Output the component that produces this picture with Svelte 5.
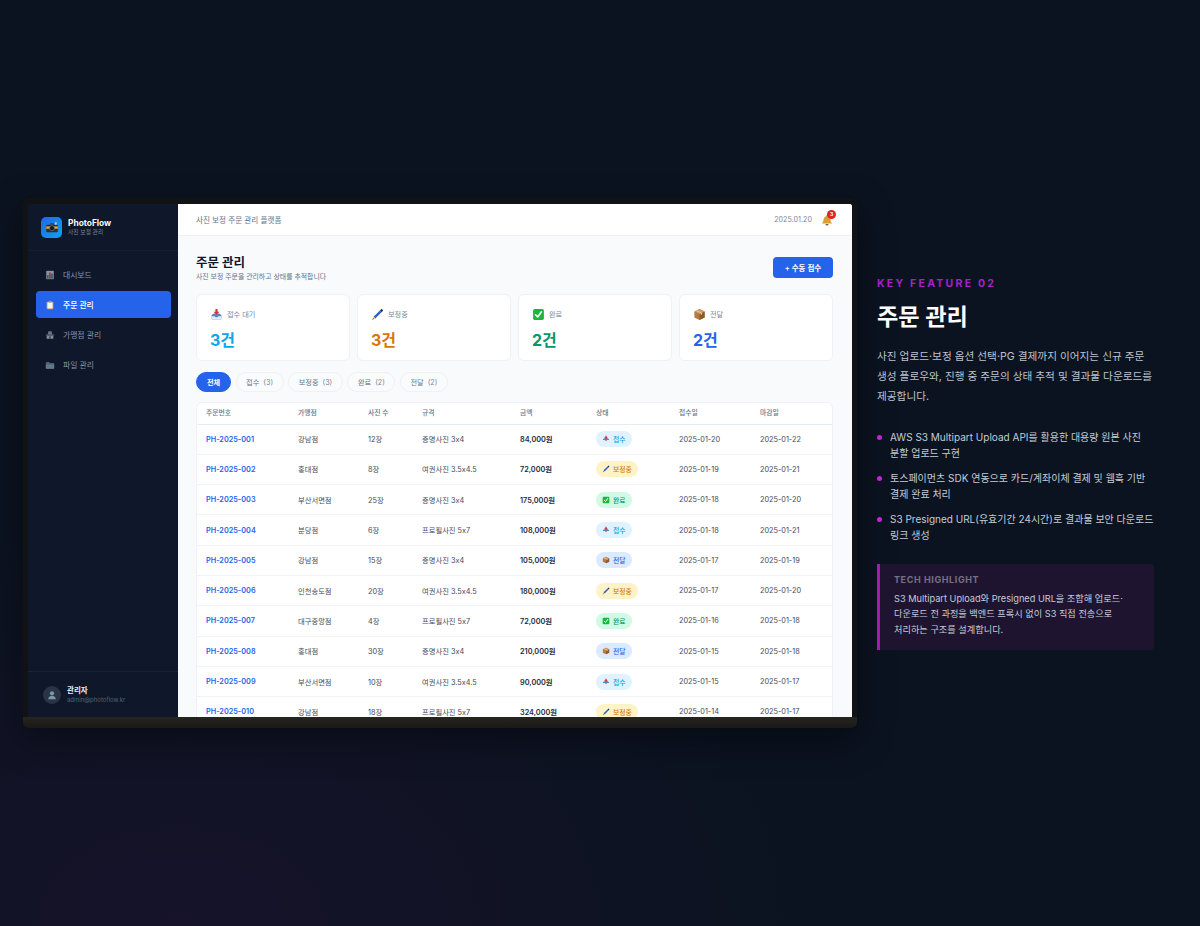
<script>
	const navItems = [
		{ label: '대시보드', icon: 'chart' },
		{ label: '주문 관리', icon: 'clipboard', active: true },
		{ label: '가맹점 관리', icon: 'store' },
		{ label: '파일 관리', icon: 'folder' }
	];

	const stats = [
		{ label: '접수 대기', value: '3건', icon: 'inbox', tone: 'sky' },
		{ label: '보정중', value: '3건', icon: 'pen', tone: 'amber' },
		{ label: '완료', value: '2건', icon: 'check', tone: 'green' },
		{ label: '전달', value: '2건', icon: 'box', tone: 'blue' }
	];

	const tabs = [
		{ label: '전체', active: true },
		{ label: '접수', count: 3 },
		{ label: '보정중', count: 3 },
		{ label: '완료', count: 2 },
		{ label: '전달', count: 2 }
	];

	const columns = ['주문번호', '가맹점', '사진 수', '규격', '금액', '상태', '접수일', '마감일'];

	const statusMap = {
		received: { label: '접수', icon: 'inbox' },
		editing: { label: '보정중', icon: 'pen' },
		done: { label: '완료', icon: 'check' },
		sent: { label: '전달', icon: 'box' }
	};

	const orders = [
		['PH-2025-001', '강남점', '12장', '증명사진 3x4', '84,000원', 'received', '2025-01-20', '2025-01-22'],
		['PH-2025-002', '홍대점', '8장', '여권사진 3.5x4.5', '72,000원', 'editing', '2025-01-19', '2025-01-21'],
		['PH-2025-003', '부산서면점', '25장', '증명사진 3x4', '175,000원', 'done', '2025-01-18', '2025-01-20'],
		['PH-2025-004', '분당점', '6장', '프로필사진 5x7', '108,000원', 'received', '2025-01-18', '2025-01-21'],
		['PH-2025-005', '강남점', '15장', '증명사진 3x4', '105,000원', 'sent', '2025-01-17', '2025-01-19'],
		['PH-2025-006', '인천송도점', '20장', '여권사진 3.5x4.5', '180,000원', 'editing', '2025-01-17', '2025-01-20'],
		['PH-2025-007', '대구중앙점', '4장', '프로필사진 5x7', '72,000원', 'done', '2025-01-16', '2025-01-18'],
		['PH-2025-008', '홍대점', '30장', '증명사진 3x4', '210,000원', 'sent', '2025-01-15', '2025-01-18'],
		['PH-2025-009', '부산서면점', '10장', '여권사진 3.5x4.5', '90,000원', 'received', '2025-01-15', '2025-01-17'],
		['PH-2025-010', '강남점', '18장', '프로필사진 5x7', '324,000원', 'editing', '2025-01-14', '2025-01-17']
	];

	const features = [
		['AWS S3 Multipart Upload API를 활용한 대용량 원본 사진', '분할 업로드 구현'],
		['토스페이먼츠 SDK 연동으로 카드/계좌이체 결제 및 웹훅 기반', '결제 완료 처리'],
		['S3 Presigned URL(유효기간 24시간)로 결과물 보안 다운로드', '링크 생성']
	];
</script>

{#snippet icon(name, size)}
	<svg class="emoji" width={size} height={size} viewBox="0 0 24 24" aria-hidden="true">
		{#if name === 'inbox'}
			<path d="M3 13l4-3h10l4 3v7a1 1 0 0 1-1 1H4a1 1 0 0 1-1-1z" fill="#4f86c6" />
			<path d="M3 15h6l1 2h4l1-2h6v5a1 1 0 0 1-1 1H4a1 1 0 0 1-1-1z" fill="#e6ecf2" />
			<path d="M10 2h4v5h3.500L12 12.500 6.500 7H10z" fill="#d8303a" />
		{:else if name === 'pen'}
			<path d="M19.500 1.500l3 3-3 3.200-3.100-3.100z" fill="#17306e" />
			<path d="M16.400 4.600l3.100 3.100L8 19.200 4.800 16z" fill="#2f62c9" />
			<path d="M4.800 16L8 19.200l-5.500 2.300z" fill="#e3b27a" />
			<path d="M3.700 19l1.300 1.300-2.500 1.200z" fill="#222" />
		{:else if name === 'check'}
			<rect x="2" y="2" width="20" height="20" rx="3" fill="#18b83c" />
			<path d="M6.500 12.500l4 4 7-9.500" fill="none" stroke="#fff" stroke-width="3" stroke-linecap="round" stroke-linejoin="round" />
		{:else if name === 'box'}
			<path d="M12 2l9.500 4.500v11L12 22l-9.500-4.500v-11z" fill="#b57a42" />
			<path d="M12 11l9.500-4.500v11L12 22z" fill="#8f5a2b" />
			<path d="M12 2l9.500 4.500L12 11 2.500 6.500z" fill="#d09a62" />
			<path d="M7 4.300l9.500 4.500v3l-2 1V9.800L5 5.300z" fill="#e8cba4" />
		{:else if name === 'chart'}
			<rect x="3" y="2" width="18" height="20" fill="#dfe5ea" />
			<rect x="5" y="12" width="3.500" height="9" fill="#2ea05a" />
			<rect x="10" y="6" width="3.500" height="15" fill="#d8413e" />
			<rect x="15" y="9" width="3.500" height="12" fill="#3b73c4" />
		{:else if name === 'clipboard'}
			<rect x="4" y="4" width="16" height="18" rx="2" fill="#c9a77e" />
			<rect x="6" y="6" width="12" height="14" fill="#f4f4f2" />
			<rect x="8.500" y="2" width="7" height="4" rx="1" fill="#8a98a8" />
		{:else if name === 'store'}
			<path d="M8 3h8l1 8H7z" fill="#a8b2bf" />
			<rect x="4" y="11" width="16" height="10" fill="#d7dde4" />
			<path d="M2 11h20v3H2z" fill="#74808e" />
			<rect x="10" y="15" width="4" height="6" fill="#5b6775" />
		{:else if name === 'folder'}
			<path d="M2 7a2 2 0 0 1 2-2h6l2 2h8a2 2 0 0 1 2 2v10a2 2 0 0 1-2 2H4a2 2 0 0 1-2-2z" fill="#6f93b0" />
			<path d="M2 11h20v8a2 2 0 0 1-2 2H4a2 2 0 0 1-2-2z" fill="#9cb9d0" />
		{:else if name === 'bell'}
			<path d="M12 2a2 2 0 0 1 2 2v.5c3.500 1 5 4 5 7.500 0 3 1 4.500 3 6v1H2v-1c2-1.500 3-3 3-6 0-3.500 1.500-6.500 5-7.500V4a2 2 0 0 1 2-2z" fill="#d9a032" />
			<path d="M9 20h6a3 3 0 0 1-6 0z" fill="#8f5a1a" />
		{:else if name === 'camera'}
			<rect x="2" y="8" width="20" height="13" rx="2" fill="#2c3136" />
			<rect x="2" y="11" width="20" height="4" fill="#e0a93b" />
			<path d="M8 8l1.500-3h5L16 8z" fill="#3d434a" />
			<rect x="17" y="4" width="3" height="4" fill="#c9d0d6" />
			<circle cx="12" cy="14" r="4.200" fill="#15181b" stroke="#7b858e" stroke-width="1" />
		{:else if name === 'user'}
			<circle cx="12" cy="8" r="5" fill="#7d97ad" />
			<path d="M3 22c0-5 4-8 9-8s9 3 9 8z" fill="#7d97ad" />
		{/if}
	</svg>
{/snippet}

<div class="page">
	<div class="device">
		<div class="screen">
			<aside class="sidebar">
				<div class="brand">
					<div class="logo">{@render icon('camera', 14)}</div>
					<div>
						<div class="brand-name">PhotoFlow</div>
						<div class="brand-sub">사진 보정 관리</div>
					</div>
				</div>
				<nav class="nav">
					{#each navItems as item}
						<div class="nav-item" class:active={item.active}>
							<span class="nav-icon">{@render icon(item.icon, 10)}</span>
							{item.label}
						</div>
					{/each}
				</nav>
				<div class="account">
					<div class="avatar">{@render icon('user', 10)}</div>
					<div>
						<div class="account-name">관리자</div>
						<div class="account-mail">admin@photoflow.kr</div>
					</div>
				</div>
			</aside>

			<main class="main">
				<header class="topbar">
					<span class="topbar-title">사진 보정 주문 관리 플랫폼</span>
					<div class="topbar-right">
						<span class="date">2025.01.20</span>
						<span class="bell">
							{@render icon('bell', 12)}
							<span class="bell-count">3</span>
						</span>
					</div>
				</header>

				<div class="content">
					<div class="page-head">
						<div>
							<h2>주문 관리</h2>
							<p>사진 보정 주문을 관리하고 상태를 추적합니다</p>
						</div>
						<button class="add-btn">+ 수동 접수</button>
					</div>

					<div class="stats">
						{#each stats as stat}
							<div class="stat">
								<div class="stat-label">
									{@render icon(stat.icon, 13)}
									<span>{stat.label}</span>
								</div>
								<div class="stat-value {stat.tone}">{stat.value}</div>
							</div>
						{/each}
					</div>

					<div class="tabs">
						{#each tabs as tab}
							<span class="tab" class:active={tab.active}>
								{tab.label}
								{#if tab.count}<em>({tab.count})</em>{/if}
							</span>
						{/each}
					</div>

					<div class="table-wrap">
						<table>
							<thead>
								<tr>
									{#each columns as col}
										<th>{col}</th>
									{/each}
								</tr>
							</thead>
							<tbody>
								{#each orders as o}
									<tr>
										<td class="order-id">{o[0]}</td>
										<td>{o[1]}</td>
										<td>{o[2]}</td>
										<td>{o[3]}</td>
										<td class="amount">{o[4]}</td>
										<td>
											<span class="badge {o[5]}">
												{@render icon(statusMap[o[5]].icon, 8)}
												{statusMap[o[5]].label}
											</span>
										</td>
										<td>{o[6]}</td>
										<td>{o[7]}</td>
									</tr>
								{/each}
							</tbody>
						</table>
					</div>
				</div>
			</main>
		</div>
	</div>

	<section class="detail">
		<div class="eyebrow">KEY FEATURE 02</div>
		<h1>주문 관리</h1>
		<p class="lead">사진 업로드·보정 옵션 선택·PG 결제까지 이어지는 신규 주문<br />생성 플로우와, 진행 중 주문의 상태 추적 및 결과물 다운로드를<br />제공합니다.</p>
		<ul>
			{#each features as feature}
				<li>{feature[0]}<br />{feature[1]}</li>
			{/each}
		</ul>
		<div class="highlight">
			<div class="highlight-title">TECH HIGHLIGHT</div>
			<p>S3 Multipart Upload와 Presigned URL을 조합해 업로드·<br />다운로드 전 과정을 백엔드 프록시 없이 S3 직접 전송으로<br />처리하는 구조를 설계합니다.</p>
		</div>
	</section>
</div>

<style>
	:global(body) {
		margin: 0;
		background: #0b1320;
	}

	.page {
		box-sizing: border-box;
		height: 926px;
		padding-left: 23px;
		display: flex;
		align-items: center;
		gap: 20px;
		overflow: hidden;
		background:
			radial-gradient(ellipse 620px 420px at 15% 100%, #16132a 0%, rgba(22, 19, 42, 0) 100%),
			#0b1320;
		font-family: Inter, 'Noto Sans CJK KR', sans-serif;
	}

	.device {
		flex: none;
		width: 834px;
		padding: 6px 5px 11px;
		box-sizing: border-box;
		border-radius: 7px 7px 6px 6px;
		background: linear-gradient(180deg, #101216 0, #101216 calc(100% - 11px), #26251f calc(100% - 11px), #191917 100%);
		box-shadow: 0 12px 36px rgba(0, 0, 0, 0.4);
	}

	.screen {
		display: flex;
		height: 513px;
		overflow: hidden;
		border-radius: 3px 3px 0 0;
	}

	.emoji {
		flex: none;
		display: block;
	}

	.sidebar {
		flex: none;
		width: 150px;
		display: flex;
		flex-direction: column;
		background: #0f172a;
	}

	.brand {
		display: flex;
		align-items: center;
		gap: 6px;
		height: 46px;
		padding-left: 13px;
		border-bottom: 1px solid #151e32;
	}

	.logo {
		width: 21px;
		height: 21px;
		border-radius: 5px;
		display: flex;
		align-items: center;
		justify-content: center;
		background: linear-gradient(135deg, #2563eb, #0ea5e9);
	}

	.brand-name {
		font-size: 8.400px;
		font-weight: 700;
		line-height: 10px;
		color: #f8fafc;
	}

	.brand-sub {
		font-size: 5.800px;
		line-height: 8px;
		color: #7b8798;
	}

	.nav {
		flex: 1;
		display: flex;
		flex-direction: column;
		gap: 3px;
		padding: 10px 7px 0 8px;
	}

	.nav-item {
		display: flex;
		align-items: center;
		gap: 8px;
		height: 27px;
		padding-left: 9px;
		border-radius: 4px;
		font-size: 7.800px;
		color: #8a95a6;
	}

	.nav-icon {
		opacity: 0.6;
	}

	.nav-item.active {
		background: #2563eb;
		color: #fff;
		font-weight: 500;
	}

	.nav-item.active .nav-icon {
		opacity: 1;
	}

	.account {
		display: flex;
		align-items: center;
		gap: 6px;
		height: 45px;
		padding-left: 15px;
		border-top: 1px solid #182238;
	}

	.avatar {
		width: 18px;
		height: 18px;
		border-radius: 50%;
		display: flex;
		align-items: center;
		justify-content: center;
		background: #2a3447;
	}

	.account-name {
		font-size: 7.500px;
		font-weight: 600;
		line-height: 10px;
		color: #e8edf3;
	}

	.account-mail {
		font-size: 6px;
		line-height: 8px;
		color: #566173;
	}

	.main {
		flex: 1;
		min-width: 0;
		display: flex;
		flex-direction: column;
		background: #f8fafc;
	}

	.topbar {
		flex: none;
		box-sizing: border-box;
		height: 32px;
		padding: 0 19px 0 18px;
		display: flex;
		align-items: center;
		justify-content: space-between;
		background: #fff;
		border-bottom: 1px solid #edf0f4;
	}

	.topbar-title {
		font-size: 7.600px;
		color: #64748b;
	}

	.topbar-right {
		display: flex;
		align-items: center;
		gap: 9px;
	}

	.date {
		font-size: 7.200px;
		color: #7c8798;
	}

	.bell {
		position: relative;
	}

	.bell-count {
		position: absolute;
		top: -4px;
		right: -3px;
		width: 9px;
		height: 9px;
		border-radius: 50%;
		background: #dc2626;
		color: #fff;
		font-size: 5px;
		font-weight: 700;
		line-height: 9px;
		text-align: center;
	}

	.content {
		flex: 1;
		padding: 19px 19px 0 18px;
	}

	.page-head {
		display: flex;
		align-items: flex-start;
		justify-content: space-between;
		height: 27px;
	}

	h2 {
		margin: 0;
		font-size: 12.500px;
		font-weight: 700;
		line-height: 16px;
		color: #0f172a;
	}

	.page-head p {
		margin: 0;
		font-size: 6.900px;
		line-height: 11px;
		color: #64748b;
	}

	.add-btn {
		width: 60px;
		height: 21px;
		margin-top: 2px;
		padding: 0;
		border: none;
		border-radius: 4px;
		background: #2563eb;
		color: #fff;
		font-family: inherit;
		font-size: 7.500px;
		font-weight: 600;
	}

	.stats {
		display: grid;
		grid-template-columns: repeat(4, 1fr);
		gap: 7px;
		margin-top: 12px;
	}

	.stat {
		box-sizing: border-box;
		height: 67px;
		padding: 12px 13px 0;
		border: 1px solid #eef1f5;
		border-radius: 6px;
		background: #fff;
	}

	.stat-label {
		display: flex;
		align-items: center;
		gap: 4px;
		height: 14px;
		font-size: 7.200px;
		color: #7c8798;
	}

	.stat-value {
		margin-top: 8px;
		font-size: 16px;
		font-weight: 700;
		line-height: 22px;
	}

	.sky {
		color: #0ea5e9;
	}

	.amber {
		color: #d97706;
	}

	.green {
		color: #059669;
	}

	.blue {
		color: #2563eb;
	}

	.tabs {
		display: flex;
		gap: 4.500px;
		margin-top: 11px;
	}

	.tab {
		box-sizing: border-box;
		height: 20px;
		padding: 0 9.600px;
		display: flex;
		align-items: center;
		gap: 4px;
		border: 1px solid #eef1f5;
		border-radius: 10px;
		background: #f9fbfd;
		font-size: 7.200px;
		color: #64748b;
	}

	.tab em {
		font-style: normal;
		color: #7c8798;
	}

	.tab.active {
		width: 35px;
		justify-content: center;
		padding: 0;
		border-color: #2563eb;
		background: #2563eb;
		color: #fff;
		font-weight: 600;
	}

	.table-wrap {
		margin-top: 10px;
		border: 1px solid #eef1f5;
		border-bottom: none;
		border-radius: 6px 6px 0 0;
		background: #fff;
	}

	table {
		width: 100%;
		table-layout: fixed;
		border-collapse: collapse;
	}

	th,
	td {
		box-sizing: border-box;
	}

	th:nth-child(1) { width: 92px; }
	th:nth-child(2) { width: 70px; }
	th:nth-child(3) { width: 54px; }
	th:nth-child(4) { width: 98px; }
	th:nth-child(5) { width: 76px; }
	th:nth-child(6) { width: 83px; }
	th:nth-child(7) { width: 81px; }

	th {
		height: 21px;
		padding: 0 0 3px 9px;
		text-align: left;
		font-size: 6.800px;
		font-weight: 500;
		color: #64748b;
		border-bottom: 1px solid #e8edf3;
	}

	td {
		height: 30.300px;
		padding: 0 0 0 9px;
		font-size: 7.300px;
		color: #3f4a5a;
		border-bottom: 1px solid #f1f4f7;
		white-space: nowrap;
	}

	.order-id {
		font-weight: 600;
		color: #2563eb;
	}

	.amount {
		font-weight: 600;
		color: #1e293b;
	}

	.badge {
		display: inline-flex;
		align-items: center;
		gap: 3px;
		height: 16px;
		padding: 0 6px;
		border-radius: 8px;
		font-size: 6.800px;
		font-weight: 500;
	}

	.received {
		background: #e0f2fe;
		color: #0ea5e9;
	}

	.editing {
		background: #fef3c7;
		color: #d97706;
	}

	.done {
		background: #d1fae5;
		color: #059669;
	}

	.sent {
		background: #dbeafe;
		color: #2563eb;
	}

	.detail {
		flex: none;
		width: 277px;
		color: #cbd5e1;
	}

	.eyebrow {
		font-size: 10.500px;
		font-weight: 700;
		letter-spacing: 2.250px;
		line-height: 14px;
		color: #a820c8;
	}

	h1 {
		margin: 8px 0 0;
		font-size: 23.200px;
		font-weight: 700;
		line-height: 36px;
		color: #fff;
	}

	.lead {
		margin: 12px 0 0;
		font-size: 10.660px;
		line-height: 20px;
		color: #bcc3ce;
		white-space: nowrap;
	}

	ul {
		margin: 22px 0 0;
		padding: 0;
		list-style: none;
	}

	li {
		position: relative;
		padding-left: 13px;
		margin-bottom: 8px;
		font-size: 10px;
		line-height: 16.500px;
		color: #c4ccd7;
		white-space: nowrap;
	}

	li::before {
		content: '';
		position: absolute;
		left: 0;
		top: 6px;
		width: 5px;
		height: 5px;
		border-radius: 50%;
		background: #c026d3;
	}

	.highlight {
		box-sizing: border-box;
		height: 86px;
		margin-top: 20px;
		padding: 10px 14px 0;
		border-left: 3px solid #a21caf;
		border-radius: 0 4px 4px 0;
		background: #1f1430;
	}

	.highlight-title {
		font-size: 9px;
		font-weight: 700;
		letter-spacing: 0.600px;
		line-height: 12px;
		color: #77707f;
	}

	.highlight p {
		margin: 5px 0 0;
		font-size: 9.200px;
		line-height: 15.500px;
		color: #c4ccd7;
		white-space: nowrap;
	}
</style>
